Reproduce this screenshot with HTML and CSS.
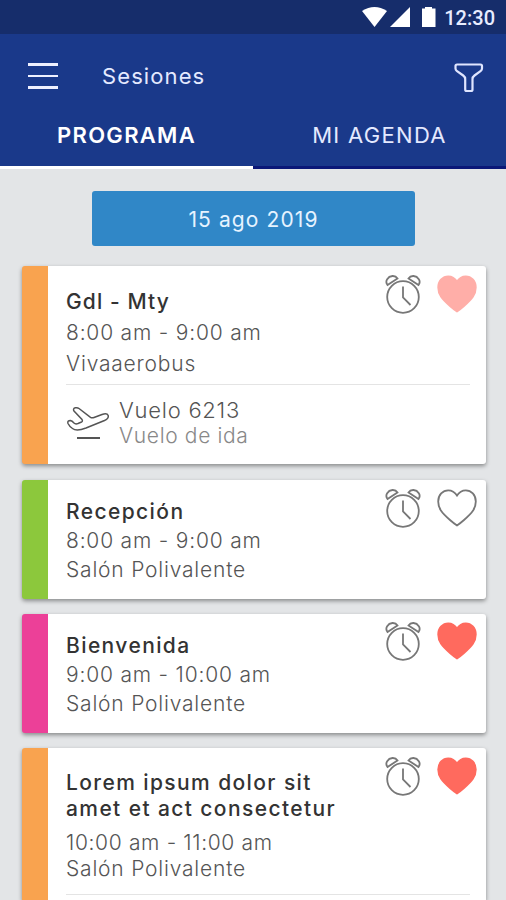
FILE: index.html
```html
<!DOCTYPE html>
<html lang="es">
<head>
    <meta charset="UTF-8">
    <meta name="viewport" content="width=device-width, initial-scale=1.0">
    <title>Sesiones</title>
    <link rel="stylesheet" href="styles.css">
</head>
<body>
    <!-- shared icons -->
    <svg class="sprite" xmlns="http://www.w3.org/2000/svg">
        <symbol id="alarm" viewBox="0 0 36 40">
            <circle cx="18" cy="23" r="15.8"/>
            <path d="M18 12.5V23.5L25.5 31"/>
            <path d="M2.5 11C-.5 7 3 2.5 7.5 2Q10.8 1.8 12.5 4.5Z"/>
            <path d="M33.5 11C36.5 7 33 2.5 28.5 2Q25.2 1.8 23.5 4.5Z"/>
        </symbol>
        <symbol id="heart" viewBox="0 0 40 38">
            <path d="M20 36.5Q17 34.5 13 31C5 24 1.200 19.500 1.200 12.500C1.200 6 5.800 1.300 11.200 1.300C15.200 1.300 18 3.300 20 6.500C22 3.300 24.800 1.300 28.800 1.300C34.200 1.300 38.800 6 38.800 12.500C38.800 19.500 35 24 27 31Q23 34.500 20 36.500Z"/>
        </symbol>
    </svg>

    <div class="status-bar">
        <svg width="75" height="22" viewBox="0 0 75 22" class="status-icons">
            <path d="M0 4Q12.500 -4 25 4L12.500 20Z"/>
            <path d="M48 0V20H28Z"/>
            <path d="M60 1.500H63V0H70V1.500H73.500V20H60Z"/>
        </svg>
        <span class="clock">12:30</span>
    </div>

    <header>
        <div class="toolbar">
            <div class="menu"><span></span><span></span><span></span></div>
            <h1>Sesiones</h1>
            <svg class="filter" width="30" height="30" viewBox="0 0 30 30">
                <path d="M3 1.500H26.500Q28 1.500 28 3V5.500Q28 7 26.800 7.800L20.500 12.500Q18.500 14 18.500 16V26.500Q18.500 28 17 28H12.700Q11.200 28 11.200 26.500V16Q11.200 14 9.200 12.500L2.700 7.800Q1.500 7 1.500 5.500V3Q1.500 1.500 3 1.500Z"/>
            </svg>
        </div>
        <nav class="tabs">
            <a class="tab active">PROGRAMA</a>
            <a class="tab">MI AGENDA</a>
        </nav>
    </header>

    <main>
        <div class="date">15 ago 2019</div>

        <article class="card orange flight-card">
            <div class="info">
                <h2>Gdl - Mty</h2>
                <p class="time">8:00 am - 9:00 am</p>
                <p class="place">Vivaaerobus</p>
            </div>
            <div class="flight">
                <svg width="44" height="36" viewBox="0 0 44 36">
                    <path d="M2 17.500Q1 14.500 4.500 14.500Q6 14.800 8 17Q9.500 18.500 12 17.500L15.500 16Q17 15.300 16 13.500L8 5Q6.500 2.500 9.500 1.800Q11.500 1.300 13 2.500L24.500 11.300Q26 12.300 28 11.500L36 8.500Q41 6.500 42.200 9.500Q43 12.500 38.500 14.500L20 22Q10.500 25.500 6.500 22.500Q3.500 20.500 2 17.500Z"/>
                    <path class="runway" d="M11 32H34"/>
                </svg>
                <div>
                    <p class="number">Vuelo 6213</p>
                    <p class="kind">Vuelo de ida</p>
                </div>
            </div>
            <div class="actions">
                <svg class="alarm"><use href="#alarm"/></svg>
                <svg class="heart soft"><use href="#heart"/></svg>
            </div>
        </article>

        <article class="card green">
            <div class="info">
                <h2>Recepción</h2>
                <p class="time">8:00 am - 9:00 am</p>
                <p class="place">Salón Polivalente</p>
            </div>
            <div class="actions">
                <svg class="alarm"><use href="#alarm"/></svg>
                <svg class="heart"><use href="#heart"/></svg>
            </div>
        </article>

        <article class="card pink">
            <div class="info">
                <h2>Bienvenida</h2>
                <p class="time">9:00 am - 10:00 am</p>
                <p class="place">Salón Polivalente</p>
            </div>
            <div class="actions">
                <svg class="alarm"><use href="#alarm"/></svg>
                <svg class="heart full"><use href="#heart"/></svg>
            </div>
        </article>

        <article class="card orange long-card">
            <div class="info">
                <h2>Lorem ipsum dolor sit<br>amet et act consectetur</h2>
                <p class="time">10:00 am - 11:00 am</p>
                <p class="place">Salón Polivalente</p>
            </div>
            <div class="flight"></div>
            <div class="actions">
                <svg class="alarm"><use href="#alarm"/></svg>
                <svg class="heart full"><use href="#heart"/></svg>
            </div>
        </article>
    </main>
</body>
</html>
```
FILE: styles.css
```css
* {
    box-sizing: border-box;
}

body {
    margin: 0;
    height: 900px;
    overflow: hidden;
    background-color: #e3e5e7;
    font-family: Inter, "Open Sans", sans-serif;
    font-size: 21px;
    color: #555;
}

h1, h2, p {
    margin: 0;
}

svg {
    display: block;
    fill: none;
    flex-shrink: 0;
}

.sprite {
    position: absolute;
    width: 0;
    height: 0;
}

.status-bar {
    display: flex;
    height: 34px;
    padding: 7px 11px 0 0;
    justify-content: flex-end;
    gap: 7px;
    background-color: #162d6b;
    color: #e8ecff;
}

.status-icons {
    fill: #fff;
}

.clock {
    font-family: Roboto, sans-serif;
    font-weight: 500;
    font-size: 20px;
    line-height: 22px;
}

header {
    height: 135px;
    background-color: #1a398a;
    color: #e4e9ff;
}

.toolbar {
    display: flex;
    height: 84px;
    padding: 0 22px 0 28px;
    align-items: center;
}

.menu {
    display: flex;
    flex-direction: column;
    gap: 9px;
    width: 30px;
}

.menu span {
    height: 2.5px;
    background-color: #eef0ff;
}

h1 {
    flex: 1;
    margin-left: 44px;
    font-size: 22px;
    font-weight: 400;
    letter-spacing: 1.1px;
}

.filter {
    margin-top: 3px;
    stroke: #dfe5ff;
    stroke-width: 2.2;
}

.tabs {
    display: flex;
    height: 51px;
}

.tab {
    flex: 1;
    text-align: center;
    line-height: 35px;
    font-size: 22px;
    letter-spacing: 1.3px;
    border-bottom: 3px solid #0b1878;
}

.active {
    font-weight: 600;
    color: #fff;
    border-bottom-color: #fff;
}

main {
    padding: 22px 20px 0 22px;
}

.date {
    width: 323px;
    height: 55px;
    margin: 0 auto 20px 70px;
    border-radius: 3px;
    background-color: #3087c7;
    color: #e6f3ff;
    line-height: 57px;
    text-align: center;
    letter-spacing: 1.1px;
}

.card {
    position: relative;
    height: 119px;
    margin-bottom: 15px;
    padding: 17px 16px 0 18px;
    border-left: 26px solid;
    border-radius: 3px;
    background-color: #fff;
    box-shadow: 0 2px 4px rgba(0, 0, 0, 0.4);
    line-height: 29px;
}

.orange {
    border-left-color: #f9a34f;
}

.green {
    border-left-color: #8cc83c;
}

.pink {
    border-left-color: #ec4098;
}

h2 {
    font-size: 21px;
    font-weight: 500;
    color: #333;
    letter-spacing: 1.4px;
}

.flight-card h2 {
    letter-spacing: 1.1px;
}

.time, .place {
    font-weight: 300;
    letter-spacing: 0.8px;
}

.flight-card {
    height: 198px;
    margin-bottom: 16px;
    padding-top: 20px;
    line-height: 31px;
}

.flight {
    display: flex;
    gap: 9px;
    margin-top: 5px;
    padding-top: 12px;
    border-top: 1px solid #e4e4e4;
    line-height: 26px;
}

.flight svg {
    margin-top: 9px;
    stroke: #555;
    stroke-width: 1.5;
}

.flight .runway {
    stroke-width: 2;
}

.number {
    font-weight: 300;
    font-size: 22px;
    letter-spacing: 0.75px;
}

.kind {
    font-weight: 300;
    color: #888;
    letter-spacing: 0.65px;
}

/* last card is cut by the bottom of the screen */
.long-card {
    height: 152px;
    margin-bottom: 0;
    padding-top: 22px;
    line-height: 26px;
    border-bottom-left-radius: 0;
    border-bottom-right-radius: 0;
}

.long-card .time {
    margin-top: 8px;
    letter-spacing: 0.65px;
}

.long-card .flight {
    margin-top: 12px;
    padding-top: 0;
}

/* alarm and favourite sit over the top right corner */
.actions {
    position: absolute;
    top: 8px;
    right: 9px;
    display: flex;
    gap: 16px;
}

.pink .actions {
    top: 7px;
}

.alarm {
    width: 36px;
    height: 40px;
    stroke: #777;
    stroke-width: 1.8;
}

.heart {
    width: 40px;
    height: 38px;
    margin-top: 1px;
    stroke: #777;
    stroke-width: 1.8;
}

.soft {
    fill: #ffaea8;
    stroke: #ffaea8;
}

.full {
    fill: #ff6a5e;
    stroke: #ff6a5e;
}
```
